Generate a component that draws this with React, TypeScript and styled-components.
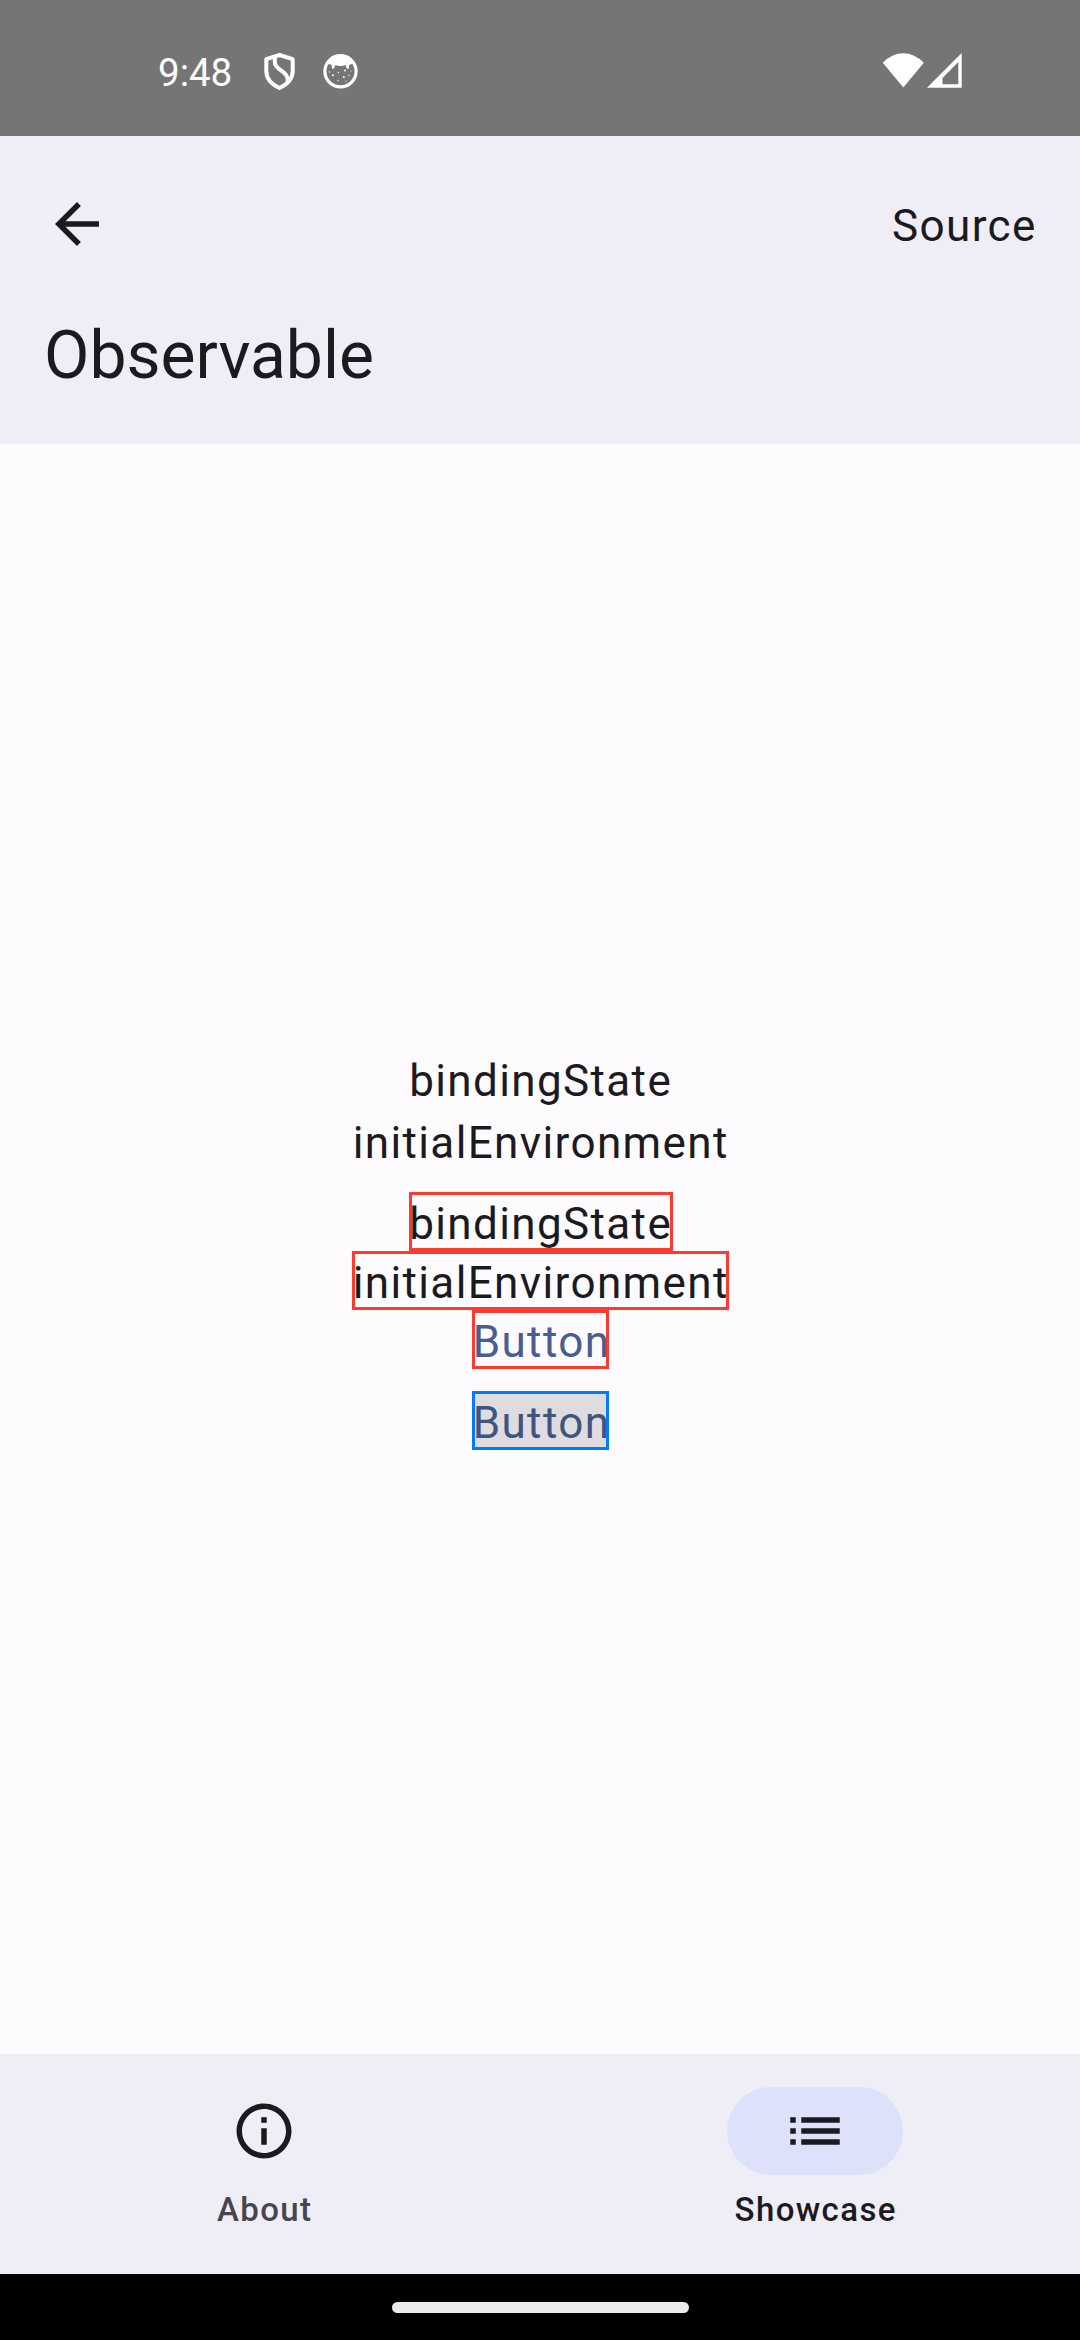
import React from 'react';
import styled, { createGlobalStyle } from 'styled-components';

const GlobalStyle = createGlobalStyle`
  * { box-sizing: border-box; }
  body { margin: 0; background: #fefbff; }
`;

const Screen = styled.div`
  width: 1080px;
  height: 2340px;
  display: flex;
  flex-direction: column;
  overflow: hidden;
  background: #fefbff;
  color: #1b1b1f;
  font-family: Roboto, "Liberation Sans", sans-serif;
  font-size: 44px;
`;

const StatusBar = styled.div`
  flex: none;
  height: 136px;
  padding: 47px 117px 0 158px;
  display: flex;
  align-items: flex-start;
  justify-content: space-between;
  background: #757575;
  color: #fff;
`;

const StatusGroup = styled.div`
  display: flex;
  height: 52px;
`;

const Clock = styled.span`
  width: 102px;
  font-size: 38.5px;
  line-height: 52px;
`;

const StatusIcon = styled.svg<{ $gap?: number }>`
  display: block;
  flex: none;
  margin-right: ${(p) => p.$gap ?? 0}px;
`;

const TopBar = styled.header`
  flex: none;
  height: 308px;
  padding: 55px 44px 0;
  background: #efedf6;
`;

const TopRow = styled.div`
  height: 66px;
  display: flex;
  align-items: center;
  justify-content: space-between;
`;

const ActionText = styled.span`
  line-height: 66px;
  letter-spacing: 1.375px;
  padding-top: 4px;
  margin-right: -0.7px;
`;

const Title = styled.h1`
  margin: 55px 0 0;
  font-size: 66px;
  font-weight: 400;
  line-height: 88px;
`;

const Content = styled.main`
  flex: 1;
  padding-left: 1px;
  display: flex;
  flex-direction: column;
  align-items: center;
  justify-content: center;
  gap: 22px;
`;

const Group = styled.div<{ $gap?: number }>`
  display: flex;
  flex-direction: column;
  align-items: center;
  gap: ${(p) => p.$gap ?? 0}px;
`;

/* The frame is an inward outline, so it is painted over the glyph edges. */
const Label = styled.div<{ $width: number; $border?: string }>`
  width: ${(p) => p.$width}px;
  height: 59px;
  padding-top: 5px;
  outline: 3px solid ${(p) => p.$border ?? 'transparent'};
  outline-offset: -3px;
  line-height: 54px;
  letter-spacing: 1.375px;
  text-indent: 0.7px;
  white-space: nowrap;
`;

const TextButton = styled.button<{ $border: string; $pressed?: boolean }>`
  width: 137px;
  height: 59px;
  margin: 0;
  padding: 5px 0 0;
  border: 0;
  outline: 3px solid ${(p) => p.$border};
  outline-offset: -3px;
  background: ${(p) => (p.$pressed ? '#dfdce0' : 'transparent')};
  color: ${(p) => (p.$pressed ? '#405482' : '#495d92')};
  font: inherit;
  line-height: 54px;
  letter-spacing: 1.375px;
  text-align: left;
  text-indent: 0.7px;
  white-space: nowrap;
`;

const NavBar = styled.nav`
  flex: none;
  height: 220px;
  padding-top: 33px;
  display: grid;
  grid-template-columns: 528px 530px;
  column-gap: 22px;
  background: #efedf6;
`;

const NavItem = styled.div<{ $active?: boolean }>`
  display: flex;
  flex-direction: column;
  align-items: center;
  gap: 13px;
  color: ${(p) => (p.$active ? '#1b1b1f' : '#46464f')};
  font-size: 33px;
  font-weight: 500;
  line-height: 44px;
  letter-spacing: 1.375px;
`;

const NavLabel = styled.span`
  padding-left: 1.375px;
`;

const Pill = styled.div<{ $active?: boolean }>`
  width: 176px;
  height: 88px;
  border-radius: 44px;
  display: flex;
  align-items: center;
  justify-content: center;
  background: ${(p) => (p.$active ? '#dde1f9' : 'transparent')};
`;

const GestureBar = styled.div`
  flex: none;
  height: 66px;
  display: flex;
  align-items: center;
  justify-content: center;
  background: #000;
`;

const Handle = styled.div`
  width: 297px;
  height: 11px;
  border-radius: 6px;
  background: #ebebeb;
`;

const MaterialIcon = ({ d }: { d: string }) => (
  <svg width="66" height="66" viewBox="0 0 24 24" fill="#1b1b1f">
    <path d={d} />
  </svg>
);

const BACK = 'M20 11H7.83l5.59-5.59L12 4l-8 8 8 8 1.41-1.41L7.83 13H20v-2z';
const INFO =
  'M11 7h2v2h-2zm0 4h2v6h-2zm1-9C6.48 2 2 6.48 2 12s4.48 10 10 10 10-4.48 10-10S17.52 2 12 2zm0 18c-4.41 0-8-3.59-8-8s3.59-8 8-8 8 3.59 8 8-3.59 8-8 8z';
const LIST =
  'M3 13h2v-2H3v2zm0 4h2v-2H3v2zm0-8h2V7H3v2zm4 4h14v-2H7v2zm0 4h14v-2H7v2zM7 7v2h14V7H7z';

const RED = '#ff3b30';
const BLUE = '#007aff';

export default function App() {
  return (
    <Screen>
      <GlobalStyle />
      <StatusBar>
        <StatusGroup>
          <Clock>9:48</Clock>
          <StatusIcon $gap={20} width="40" height="46" viewBox="0 0 40 46" fill="none" stroke="#fff" strokeWidth="4" strokeLinejoin="round">
            <path d="M19.5 8 L32.7 12.2 V24 C32.7 32 27 37.5 19.5 41 C12 37.5 6.3 32 6.3 24 V12.2 Z" />
            <path d="M14.8 10 V15 C14.8 24 29.5 23.5 27.5 35" />
          </StatusIcon>
          <StatusIcon width="42" height="46" viewBox="0 0 42 46" fill="#fff">
            <circle cx="20.5" cy="24.3" r="15.6" fill="none" stroke="#fff" strokeWidth="3.2" />
            <path d="M7.5 17 Q12 8.5 20.5 8.2 Q29 8.5 33.5 17 L29.5 17.5 L28.6 22 L26.8 21.5 L25.6 18 Q20.5 20 15.4 18 L14 21.5 L12.2 22 L11.4 17.5 Z" />
            <circle cx="13" cy="28.3" r="1" />
            <circle cx="25" cy="23.5" r="1" />
            <circle cx="23.8" cy="30" r="1" />
            <circle cx="29" cy="28.5" r=".7" />
            <circle cx="18" cy="33.5" r=".7" />
            <circle cx="9.5" cy="25" r=".7" />
            <circle cx="18.5" cy="25.5" r=".7" />
            <circle cx="26" cy="34" r=".6" />
            <circle cx="31" cy="24" r=".6" />
          </StatusIcon>
        </StatusGroup>
        <StatusGroup>
          <StatusIcon $gap={3} width="42" height="42" viewBox="0 0 42 42" fill="#fff">
            <path d="M.8 15.8 Q9.8 6.3 21.3 6.3 Q32.6 6.3 41.8 15.8 L21.3 40.5 Z" />
          </StatusIcon>
          <StatusIcon width="36" height="42" viewBox="0 0 36 42" fill="#fff">
            <path fillRule="evenodd" d="M0 40.8 L34.7 6 V40.8 Z M15.5 37.2 H31.3 V15 L15.5 31 Z" />
          </StatusIcon>
        </StatusGroup>
      </StatusBar>

      <TopBar>
        <TopRow>
          <MaterialIcon d={BACK} />
          <ActionText>Source</ActionText>
        </TopRow>
        <Title>Observable</Title>
      </TopBar>

      <Content>
        <Group $gap={3}>
          <Label $width={264}>bindingState</Label>
          <Label $width={377}>initialEnvironment</Label>
        </Group>
        <Group>
          <Label $width={264} $border={RED}>bindingState</Label>
          <Label $width={377} $border={RED}>initialEnvironment</Label>
          <TextButton $border={RED}>Button</TextButton>
        </Group>
        <TextButton $border={BLUE} $pressed>Button</TextButton>
      </Content>

      <NavBar>
        <NavItem>
          <Pill><MaterialIcon d={INFO} /></Pill>
          <NavLabel>About</NavLabel>
        </NavItem>
        <NavItem $active>
          <Pill $active><MaterialIcon d={LIST} /></Pill>
          <NavLabel>Showcase</NavLabel>
        </NavItem>
      </NavBar>

      <GestureBar>
        <Handle />
      </GestureBar>
    </Screen>
  );
}
